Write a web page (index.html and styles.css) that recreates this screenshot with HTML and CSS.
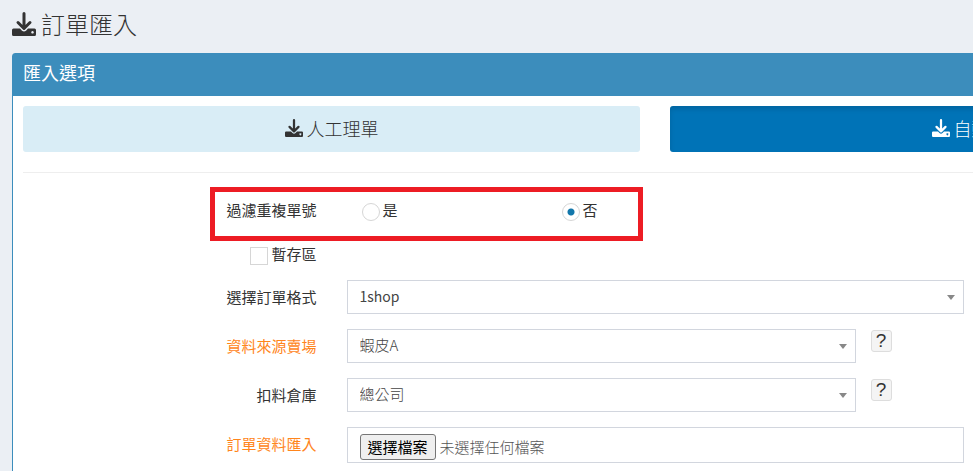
FILE: index.html
```html
<!DOCTYPE html>
<html lang="zh-Hant">
<head>
    <meta charset="UTF-8">
    <meta name="viewport" content="width=device-width, initial-scale=1.0">
    <title>訂單匯入</title>
    <link rel="stylesheet" href="styles.css">
</head>
<body>

    <svg class="sprite" aria-hidden="true">
        <symbol id="icon-import" viewBox="0 0 24 24">
            <path d="M0 18Q0 16.500 1.500 16.500H8l2 2.200q2 1.600 4 0l2-2.200h6.500Q24 16.500 24 18v4.500Q24 24 22.500 24h-21Q0 24 0 22.500zM20.500 19a1.300 1.300 0 1 0 .01 0z" fill="currentColor"/>
            <path d="M12 1.500V15M6 10.500l6 6 6-6" fill="none" stroke="currentColor" stroke-width="3" stroke-linecap="round" stroke-linejoin="round"/>
        </symbol>
    </svg>

    <div class="page">
        <h1 class="page-title"><svg class="icon"><use href="#icon-import"/></svg>訂單匯入</h1>

        <section class="panel">
            <h2 class="panel-heading">匯入選項</h2>

            <div class="panel-body">
                <div class="modes">
                    <button type="button" class="btn btn-info"><svg class="icon"><use href="#icon-import"/></svg>人工理單</button>
                    <button type="button" class="btn btn-active"><svg class="icon"><use href="#icon-import"/></svg>自動理單</button>
                </div>

                <hr>

                <form>
                    <div class="row row-short marked" role="radiogroup" aria-labelledby="filter-label">
                        <span class="label" id="filter-label">過濾重複單號</span>
                        <div class="field options">
                            <label class="check"><input type="radio" name="filter" value="1">是</label>
                            <label class="check"><input type="radio" name="filter" value="0" checked>否</label>
                        </div>
                    </div>

                    <div class="row row-short">
                        <div class="label">
                            <label class="check"><input type="checkbox" name="temp">暫存區</label>
                        </div>
                    </div>

                    <div class="row">
                        <label class="label" for="format">選擇訂單格式</label>
                        <div class="field">
                            <div class="select">
                                <select id="format" class="latin"><option>1shop</option></select>
                            </div>
                        </div>
                    </div>

                    <div class="row">
                        <label class="label required" for="store">資料來源賣場</label>
                        <div class="field field-narrow">
                            <div class="select">
                                <select id="store"><option>蝦皮A</option></select>
                            </div>
                        </div>
                        <button type="button" class="help">?</button>
                    </div>

                    <div class="row">
                        <label class="label" for="warehouse">扣料倉庫</label>
                        <div class="field field-narrow">
                            <div class="select">
                                <select id="warehouse"><option>總公司</option></select>
                            </div>
                        </div>
                        <button type="button" class="help">?</button>
                    </div>

                    <div class="row">
                        <label class="label required" for="file">訂單資料匯入</label>
                        <div class="field">
                            <div class="file">
                                <input type="file" id="file">
                                <span class="file-button">選擇檔案</span>
                                <span>未選擇任何檔案</span>
                            </div>
                        </div>
                    </div>
                </form>
            </div>
        </section>
    </div>

</body>
</html>
```
FILE: styles.css
```css
*,
*::after {
    box-sizing: border-box;
}

body {
    margin: 0;
    background-color: #ebeff4;
    color: #333;
    font-family: "Noto Sans CJK TC", sans-serif;
    font-size: 15px;
    line-height: 20px;
}

button, select, input {
    font: inherit;
    color: inherit;
}

.sprite {
    display: none;
}

.icon {
    width: 1em;
    height: 1em;
    flex: none;
}

.page {
    height: 100vh;
    padding: 8px 12px 0;
    overflow: auto;
    scrollbar-width: none;
}

.page-title {
    display: flex;
    align-items: center;
    gap: 5px;
    margin: 0 0 13px;
    font-size: 24px;
    font-weight: 300;
    line-height: 32px;
}

/* 面板 */
.panel {
    min-width: 1286px;
    border: 1px solid #3c8dbc;
    border-radius: 3px;
    background-color: #fff;
}

.panel-heading {
    margin: 0;
    padding: 7px 10px 13px;
    background-color: #3c8dbc;
    color: #fff;
    font-size: 18px;
    font-weight: 400;
    line-height: 22px;
}

.panel-body {
    padding: 10px;
}

.modes {
    display: grid;
    grid-template-columns: 1fr 1fr;
    gap: 30px;
}

.btn {
    display: flex;
    align-items: center;
    justify-content: center;
    gap: 4px;
    height: 46px;
    padding: 0 0 3px;
    border: 0;
    border-radius: 3px;
    font-size: 18px;
    font-weight: 300;
    cursor: pointer;
}

.btn-info {
    background-color: #d9edf6;
}

.btn-active {
    background-color: #0073b7;
    box-shadow: inset 0 3px 5px rgba(0, 0, 0, 0.125);
    color: #fff;
}

hr {
    margin: 20px 0;
    border: 0;
    border-top: 1px solid #eee;
}

/* 表單 */
.row {
    display: flex;
    position: relative;
    margin: 0 -15px 15px;
}

.row-short {
    height: 28px;
}

.label {
    display: flex;
    justify-content: flex-end;
    width: 25%;
    padding: 7px 15px 0;
}

.required {
    color: #ff851b;
}

.field {
    width: 50%;
    padding: 0 15px;
}

.field-narrow {
    width: 41.6667%;
}

.options {
    display: flex;
    padding: 7px 30px 0;
}

.options .check {
    width: 200px;
}

.check {
    display: flex;
    gap: 3px;
}

.check input {
    appearance: none;
    width: 18px;
    height: 18px;
    margin: 3px 0 0;
    border: 1px solid #d6d6d6;
    background-color: #fff;
}

.check input[type="radio"] {
    border-radius: 50%;
}

.check input:checked {
    background-image: radial-gradient(circle, #1277ab 3px, #fff 4px);
}

/* 重點提示框 */
.marked {
    margin-bottom: 16px;
}

.marked::after {
    content: "";
    position: absolute;
    top: -6px;
    left: 202px;
    width: 433px;
    height: 54px;
    border: 5px solid #ed1c24;
    pointer-events: none;
}

.select {
    position: relative;
}

.select::after {
    content: "";
    position: absolute;
    top: 15px;
    right: 9px;
    border: 4px solid transparent;
    border-top: 5px solid #888;
    border-bottom: 0;
    pointer-events: none;
}

select {
    display: block;
    appearance: none;
    width: 100%;
    height: 34px;
    padding: 0 12px 2px;
    border: 1px solid #d2d6de;
    border-radius: 0;
    background-color: #fff;
    color: #444;
    font-weight: 300;
}

.latin {
    font-size: 14px;
    font-weight: 400;
}

.help {
    width: 21px;
    height: 22px;
    margin-top: 1px;
    padding: 0;
    border: 1px solid #ddd;
    border-radius: 3px;
    background-color: #f4f4f4;
    font-family: "Liberation Sans", sans-serif;
    font-size: 19px;
    line-height: 20px;
}

.file {
    display: flex;
    position: relative;
    align-items: center;
    gap: 4px;
    height: 36px;
    padding: 4px 12px 0;
    border: 1px solid #d2d6de;
    color: #555;
    font-weight: 300;
}

/* 透明的檔案欄位蓋在按鈕上 */
.file input {
    position: absolute;
    inset: 0;
    width: 100%;
    opacity: 0;
}

.file-button {
    padding: 2px 7px;
    border: 1px solid #767676;
    border-radius: 3px;
    background-color: #efefef;
    color: #000;
    font-weight: 400;
}
```
